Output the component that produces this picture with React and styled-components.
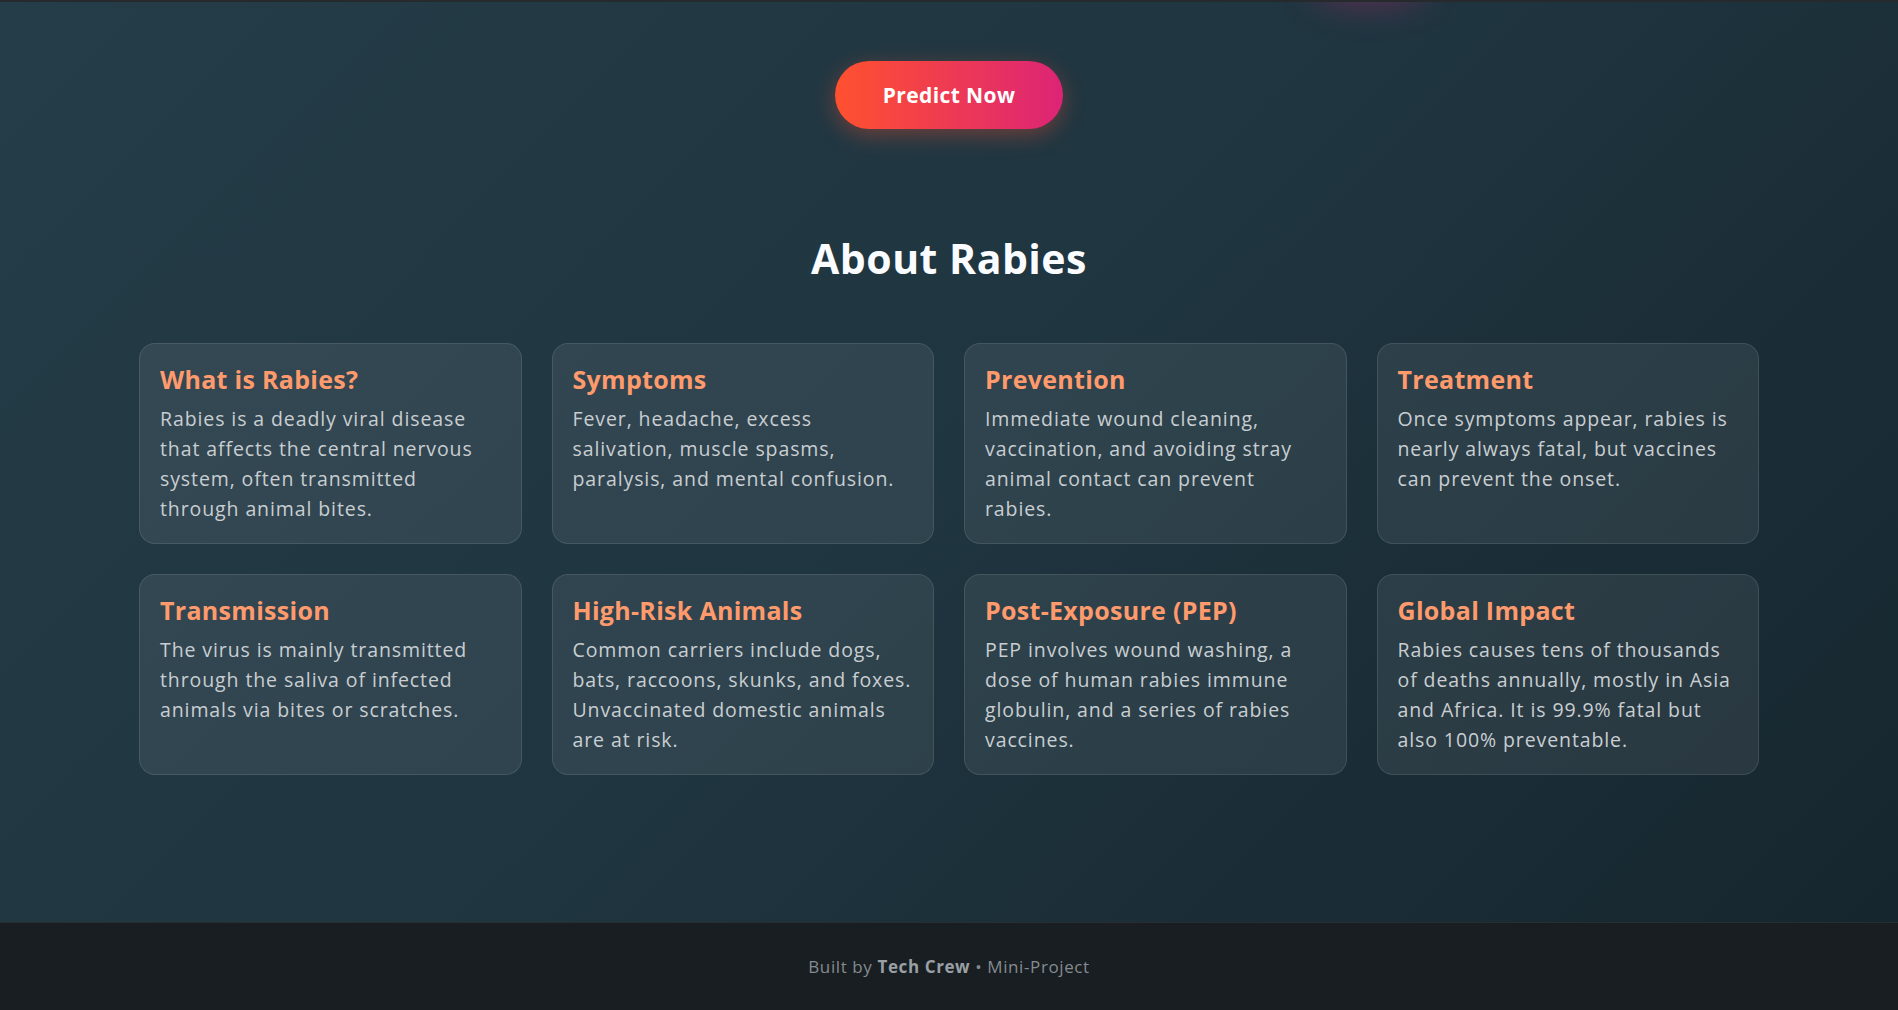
import React from 'react'
import styled, { createGlobalStyle } from 'styled-components'

const accent = "#FF9A6C"
const bodyText = "#C9CED2"

const GlobalStyle = createGlobalStyle`
  html, body {
    margin: 0;
    padding: 0;
    background: #181e21;
  }
  * { box-sizing: border-box; }
  body {
    font-family: 'Open Sans', 'Noto Sans', sans-serif;
  }
`

const Page = styled.div`
  min-height: 100vh;
  display: flex;
  flex-direction: column;
  background: #181e21;
`

const Main = styled.main`
  position: relative;
  flex: 1;
  border-top: 2px solid #262a2c;
  background: linear-gradient(135deg, #253d48 0%, #1f3540 50%, #16262e 100%);
  padding: 59px 0 146px;
  overflow: hidden;

  &::before{
    content: '';
    position: absolute;
    top: -38px;
    left: 1310px;
    width: 120px;
    height: 44px;
    border-radius: 50%;
    background: rgba(221, 36, 118, 0.28);
    filter: blur(16px);
  }
`

const Hero = styled.div`
  display: flex;
  justify-content: center;
`

const PredictButton = styled.button`
  font-family: 'Open Sans', sans-serif;
  font-size: 21px;
  font-weight: 700;
  letter-spacing: 0.4px;
  line-height: 28px;
  color: #fff;
  border: none;
  border-radius: 40px;
  padding: 20px 48px;
  background: linear-gradient(90deg, #ff512f, #dd2476);
  box-shadow: 0 6px 22px rgba(255, 81, 47, 0.35);
  cursor: pointer;
`

const Section = styled.section`
  margin-top: 105px;
  display: flex;
  flex-direction: column;
  align-items: center;
`

const Heading = styled.h2`
  margin: 0;
  font-size: 41px;
  line-height: 48px;
  font-weight: 700;
  color: #fafcff;
  letter-spacing: 0.5px;
`

const Grid = styled.div`
  margin-top: 61px;
  width: 1620px;
  display: grid;
  grid-template-columns: repeat(4, 1fr);
  gap: 30px;
`

const Card = styled.div`
  padding: 20px 20px 19px;
  border-radius: 16px;
  background: rgba(255, 255, 255, 0.075);
  border: 1px solid rgba(255, 255, 255, 0.1);
`

const CardTitle = styled.h3`
  margin: 0 0 10px;
  font-size: 25px;
  line-height: 30px;
  font-weight: 700;
  letter-spacing: 0.3px;
  color: ${accent};
`

const CardText = styled.p`
  margin: 0;
  font-size: 19.5px;
  line-height: 30px;
  letter-spacing: 0.9px;
  color: ${bodyText};
`

const Footer = styled.footer`
  height: 88px;
  display: flex;
  align-items: center;
  justify-content: center;
  border-top: 1px solid rgba(255, 255, 255, 0.07);
  background: #181e21;
  font-size: 17px;
  letter-spacing: 0.6px;
  color: #858b90;

  strong{
    font-weight: 700;
    color: #9aa0a5;
  }
`

const facts = [
  { title: "What is Rabies?", text: "Rabies is a deadly viral disease that affects the central nervous system, often transmitted through animal bites." },
  { title: "Symptoms", text: "Fever, headache, excess salivation, muscle spasms, paralysis, and mental confusion." },
  { title: "Prevention", text: "Immediate wound cleaning, vaccination, and avoiding stray animal contact can prevent rabies." },
  { title: "Treatment", text: "Once symptoms appear, rabies is nearly always fatal, but vaccines can prevent the onset." },
  { title: "Transmission", text: "The virus is mainly transmitted through the saliva of infected animals via bites or scratches." },
  { title: "High-Risk Animals", text: "Common carriers include dogs, bats, raccoons, skunks, and foxes. Unvaccinated domestic animals are at risk." },
  { title: "Post-Exposure (PEP)", text: "PEP involves wound washing, a dose of human rabies immune globulin, and a series of rabies vaccines." },
  { title: "Global Impact", text: "Rabies causes tens of thousands of deaths annually, mostly in Asia and Africa. It is 99.9% fatal but also 100% preventable." },
]

const App = () => {
  return (
    <Page>
      <GlobalStyle />
      <Main>
        <Hero>
          <PredictButton>Predict Now</PredictButton>
        </Hero>

        <Section>
          <Heading>About Rabies</Heading>
          <Grid>
            {facts.map(f => (
              <Card key={f.title}>
                <CardTitle>{f.title}</CardTitle>
                <CardText>{f.text}</CardText>
              </Card>
            ))}
          </Grid>
        </Section>
      </Main>

      <Footer>
        <span>Built by <strong>Tech Crew</strong> • Mini-Project</span>
      </Footer>
    </Page>
  )
}

export default App
